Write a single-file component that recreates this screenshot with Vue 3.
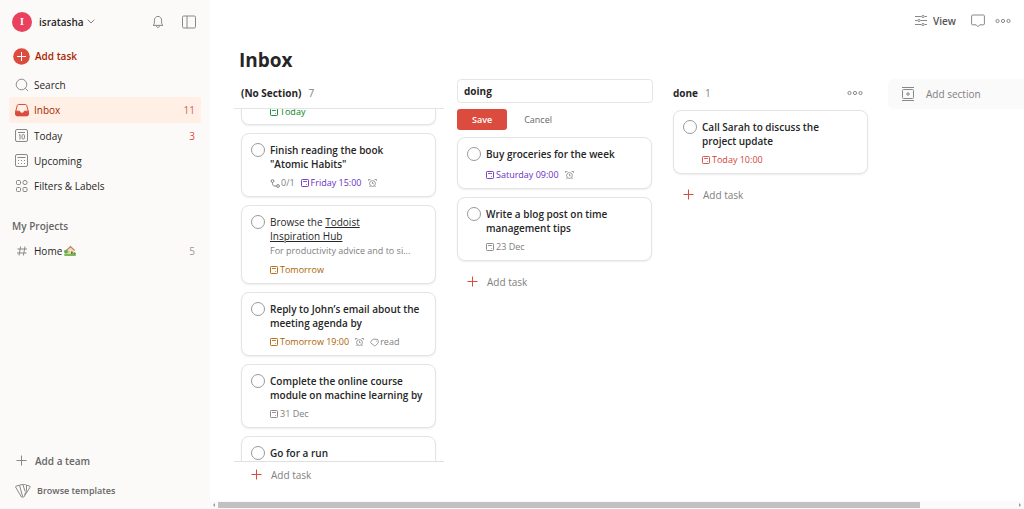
<script setup>
import { ref } from 'vue'

const navItems = [
  { label: 'Search', icon: 'search' },
  { label: 'Inbox', icon: 'inbox', count: 11, active: true },
  { label: 'Today', icon: 'today', count: 3, hot: true },
  { label: 'Upcoming', icon: 'upcoming' },
  { label: 'Filters & Labels', icon: 'filters' }
]

const sectionName = ref('doing')

const columns = [
  {
    id: 'none',
    name: '(No Section)',
    count: 7,
    scrolled: true,
    tasks: [
      { id: 1, cut: true, due: 'Today', tone: 'green' },
      { id: 2, title: 'Finish reading the book\n"Atomic Habits"', sub: '0/1', due: 'Friday 15:00', tone: 'purple', alarm: true },
      { id: 3, title: 'Browse the ', link: 'Todoist\nInspiration Hub', plain: true, note: 'For productivity advice and to si...', due: 'Tomorrow', tone: 'orange' },
      { id: 4, title: 'Reply to John’s email about the meeting agenda by', due: 'Tomorrow 19:00', tone: 'orange', alarm: true, label: 'read' },
      { id: 5, title: 'Complete the online course module on machine learning by', due: '31 Dec', tone: 'grey' },
      { id: 6, title: 'Go for a run' }
    ]
  },
  {
    id: 'doing',
    editing: true,
    tasks: [
      { id: 7, title: 'Buy groceries for the week', due: 'Saturday 09:00', tone: 'purple', alarm: true },
      { id: 8, title: 'Write a blog post on time management tips', due: '23 Dec', tone: 'grey' }
    ]
  },
  {
    id: 'done',
    name: 'done',
    count: 1,
    menu: true,
    tasks: [
      { id: 9, title: 'Call Sarah to discuss the\nproject update', due: 'Today 10:00', tone: 'red' }
    ]
  }
]
</script>

<template>
  <svg class="sprite" aria-hidden="true">
    <symbol id="i-search" viewBox="0 0 14 14"><circle cx="6.5" cy="6.5" r="5.3" /><path d="M10.4 10.4 13 13" /></symbol>
    <symbol id="i-inbox" viewBox="0 0 14 14">
      <path d="M3.4 1.5h7.2c.6 0 1 .4 1.1.9l1.6 6v3.1c0 .7-.5 1.2-1.2 1.2H1.9c-.7 0-1.2-.5-1.2-1.2V8.4l1.6-6c.1-.5.5-.9 1.1-.9z" />
      <path class="solid" d="M.7 8.200h3.900c.2 1.200 1.200 2 2.400 2s2.200-.8 2.400-2h3.900v3.300c0 .7-.5 1.200-1.200 1.200H1.900c-.7 0-1.200-.5-1.200-1.200z" />
    </symbol>
    <symbol id="i-today" viewBox="0 0 14 14"><rect x=".5" y=".5" width="12" height="12" rx="1.5" /><path d="M3 3.500h7M4 6.200l1-.7v5" /><rect x="7" y="5.500" width="2.500" height="4.500" rx="1.200" /></symbol>
    <symbol id="i-upcoming" viewBox="0 0 14 14"><rect x=".5" y=".5" width="12" height="12" rx="1.5" /><path d="M2.500 3.500h8M3 6.500h1M6 6.500h1M9 6.500h1M3 9.500h1M6 9.500h1M9 9.500h1" /></symbol>
    <symbol id="i-filters" viewBox="0 0 14 14"><rect x="1.500" y="1.500" width="4" height="4" rx="1" /><circle cx="10" cy="3.500" r="2.100" /><rect x="1.500" y="8.500" width="4" height="4" rx="1" /><rect x="8" y="8.500" width="4" height="4" rx="1" /></symbol>
    <symbol id="i-hash" viewBox="0 0 14 14"><path d="M5.600 2.500 4 11.500M10 2.500 8.400 11.500M2.500 5h9.500M2 9h9.500" /></symbol>
    <symbol id="i-plus" viewBox="0 0 14 14"><path d="M6.500 1.500v10M1.500 6.500h10" /></symbol>
    <symbol id="i-bell" viewBox="0 0 14 14"><path d="M2 10.400c1-.7 1.400-1.600 1.400-3.200V5.300C3.400 3 4.900 1.400 7 1.400s3.600 1.600 3.600 3.900v1.900c0 1.600.4 2.500 1.400 3.200zM5.500 10.600c0 1.200.6 1.900 1.500 1.900s1.500-.7 1.500-1.900" /></symbol>
    <symbol id="i-panel" viewBox="0 0 14 14"><rect x=".5" y="1" width="13" height="12" rx="1.200" /><path d="M5 1v12" /></symbol>
    <symbol id="i-templates" viewBox="0 0 16 14"><path d="M4.500 1.200 1 2.200c-.4.200-.5.500-.4.900L6.400 13l1.200.4M4.500 1.200 7 .6c1.800-.3 3.500 0 4.500.6M4.500 1.200l3.100 11.400c.2.600.6.800 1.200.4l6.400-9.900c.2-.4.100-.7-.3-.9l-3.400-1M8 .8l2 6.500M11.500 1.200v5.500l-2 4.500" /></symbol>
    <symbol id="i-cal" viewBox="0 0 9 9"><rect x=".5" y=".5" width="7" height="7" rx=".8" stroke-width=".9" /><path d="M2 2.500h4" stroke-width=".8" /><path d="M5 5.500h1" stroke-width=".6" /></symbol>
    <symbol id="i-alarm" viewBox="0 0 9 9"><circle cx="4.500" cy="4.500" r="2.900" stroke-width=".8" /><path d="M4.500 3v1.700h1.200M.5.500h1.900M6.600.5h1.900M.5.500v1.300M8.500.5v1.300M2.300 7l-.9 1M6.700 7l.9 1" stroke-width=".8" /></symbol>
    <symbol id="i-sub" viewBox="0 0 10 9"><circle cx="2.500" cy="2" r="1.400" /><circle cx="8" cy="7" r="1.400" /><path d="M2.500 3.500v1C2.500 6.200 3.300 7 4.800 7h1.700" /></symbol>
    <symbol id="i-tag" viewBox="0 0 9 8"><path d="M3.300.8h3.600c.8 0 1.300.5 1.300 1.200v2c0 .3-.1.600-.3.800L5.500 7c-.4.400-.9.400-1.300.1L.9 4.500c-.4-.3-.4-.8-.1-1.200L2.400 1.200c.2-.3.500-.4.900-.4z" stroke-width=".8" /><circle class="solid" cx="6.300" cy="2.600" r=".2" stroke-width=".5" /></symbol>
    <symbol id="i-sliders" viewBox="0 0 14 12"><path d="M1 1.500h6.500M10.500 1.500H13M1 5.500h2.500M6.500 5.500H13M1 9.500h6.500M10.500 9.500H13" /><circle cx="9" cy="1.500" r="1.100" /><circle cx="5" cy="5.500" r="1.100" /><circle cx="9" cy="9.500" r="1.100" /></symbol>
    <symbol id="i-comment" viewBox="0 0 14 14"><path d="M1.500 1h11c.5 0 .9.400.9.900v8c0 .5-.4.900-.9.900H8.800L7 12.700l-1.800-1.900H1.500c-.5 0-.9-.4-.9-.9v-8c0-.5.400-.9.900-.9z" /></symbol>
    <symbol id="i-dots" viewBox="0 0 16 6"><circle cx="2.500" cy="3" r="1.600" /><circle cx="8" cy="3" r="1.600" /><circle cx="13.500" cy="3" r="1.600" /></symbol>
    <symbol id="i-section" viewBox="0 0 14 14"><path d="M1 .5h12M1 13.500h12M7 5v4M5 7h4" /><rect x="1.500" y="2.500" width="11" height="9" rx="1" /></symbol>
  </svg>

  <div class="app">
    <aside class="sidebar">
      <div class="profile">
        <button class="user" type="button">
          <span class="avatar">I</span>
          <span>isratasha</span>
          <svg class="chevron" viewBox="0 0 8 5" aria-hidden="true"><path d="M.7.700 4 4 7.300.7" /></svg>
        </button>
        <div class="profile-tools">
          <button type="button" aria-label="Notifications"><svg class="icon"><use href="#i-bell" /></svg></button>
          <button type="button" aria-label="Toggle sidebar"><svg class="icon"><use href="#i-panel" /></svg></button>
        </div>
      </div>

      <button class="quick-add" type="button">
        <svg class="quick-icon" viewBox="0 0 17 17" aria-hidden="true"><circle cx="8.500" cy="8.500" r="8.300" /><path d="M8.500 4v9M4 8.500h9" /></svg>
        <span>Add task</span>
      </button>

      <nav>
        <a v-for="item in navItems" :key="item.label" class="nav-row" :class="{ active: item.active, hot: item.hot }" href="#">
          <svg class="icon"><use :href="'#i-' + item.icon" /></svg>
          <span class="nav-label">{{ item.label }}</span>
          <span v-if="item.count" class="nav-count">{{ item.count }}</span>
        </a>
      </nav>

      <h2 class="projects-title">My Projects</h2>
      <a class="nav-row" href="#">
        <svg class="icon"><use href="#i-hash" /></svg>
        <span class="nav-label project">Home
          <svg class="house" viewBox="0 0 12 11" role="img" aria-label="House with garden">
            <path fill="#f3e3b0" d="M3 5.500 6.500 2 10 5.500V10H3z" />
            <path fill="#b9825b" d="M6.500.800 1.800 5.200l.9.900 3.800-3.600 3.800 3.600.9-.9z" />
            <path fill="#8a5a3c" d="M7 6.500h1.700V10H7z" />
            <path fill="#8fc7e8" d="M4.200 6h1.600v1.600H4.200z" />
            <circle cx="2" cy="6.800" r="2" fill="#6aa84f" />
            <path fill="#7cb95b" d="M.3 8.800h11.400V11H.3z" />
            <circle cx="10.500" cy="8.500" r="1.200" fill="#5b9a43" />
          </svg>
        </span>
        <span class="nav-count">5</span>
      </a>

      <div class="side-foot">
        <button class="foot-row" type="button"><svg class="icon"><use href="#i-plus" /></svg><span>Add a team</span></button>
        <button class="foot-row small" type="button"><svg class="icon wide"><use href="#i-templates" /></svg><span>Browse templates</span></button>
      </div>
    </aside>

    <main class="main">
      <header class="topbar">
        <button class="view" type="button"><svg class="icon"><use href="#i-sliders" /></svg><span>View</span></button>
        <button type="button" aria-label="Comments"><svg class="icon"><use href="#i-comment" /></svg></button>
        <button type="button" aria-label="More options"><svg class="dots"><use href="#i-dots" /></svg></button>
      </header>
      <h1>Inbox</h1>

      <div class="board">
        <section v-for="col in columns" :key="col.id" class="column">
          <form v-if="col.editing" class="edit" @submit.prevent>
            <input v-model="sectionName" type="text" aria-label="Section name">
            <div class="edit-actions">
              <button class="save" type="submit">Save</button>
              <button class="cancel" type="button">Cancel</button>
            </div>
          </form>
          <header v-else class="col-head">
            <h3>{{ col.name }}</h3>
            <span class="col-count">{{ col.count }}</span>
            <button v-if="col.menu" class="col-menu" type="button" aria-label="Section options"><svg class="dots"><use href="#i-dots" /></svg></button>
          </header>

          <div class="list" :class="{ scrolled: col.scrolled }">
            <article v-for="task in col.tasks" :key="task.id" class="card" :class="{ cut: task.cut }">
              <input v-if="task.title" :id="'task-' + task.id" class="check" type="checkbox">
              <div class="body">
                <label v-if="task.title" class="title" :class="{ plain: task.plain }" :for="'task-' + task.id">{{ task.title }}<a v-if="task.link" href="#">{{ task.link }}</a></label>
                <p v-if="task.note" class="note">{{ task.note }}</p>
                <div v-if="task.due" class="meta">
                  <span v-if="task.sub" class="chip"><svg class="sub"><use href="#i-sub" /></svg>{{ task.sub }}</span>
                  <span class="chip" :class="task.tone"><svg class="mini"><use href="#i-cal" /></svg>{{ task.due }}</span>
                  <svg v-if="task.alarm" class="mini" role="img" aria-label="Reminder"><use href="#i-alarm" /></svg>
                  <span v-if="task.label" class="chip"><svg class="mini"><use href="#i-tag" /></svg>{{ task.label }}</span>
                </div>
              </div>
            </article>
          </div>
          <button class="add-task" type="button"><svg class="icon"><use href="#i-plus" /></svg><span>Add task</span></button>
        </section>

        <section class="column">
          <button class="add-section" type="button"><svg class="icon"><use href="#i-section" /></svg><span>Add section</span></button>
        </section>
      </div>

      <div class="scrollbar" aria-hidden="true">
        <svg class="arrow" viewBox="0 0 8 8"><path d="M5 2v4L3 4z" /></svg>
        <div class="track"><div class="thumb"></div></div>
        <svg class="arrow" viewBox="0 0 8 8"><path d="M3 2v4l2-2z" /></svg>
      </div>
    </main>
  </div>
</template>

<style>
body {
  margin: 0;
  background: #fff;
}
</style>

<style scoped>
.app {
  display: flex;
  height: 100vh;
  overflow: hidden;
  font-family: "Open Sans", "Noto Sans", sans-serif;
  font-size: 10px;
  line-height: 14px;
  color: #262626;
}
.sprite {
  position: absolute;
  width: 0;
  height: 0;
}
button {
  display: flex;
  align-items: center;
  margin: 0;
  padding: 0;
  border: 0;
  background: none;
  font: inherit;
  color: inherit;
}
a {
  color: inherit;
  text-decoration: none;
}
h1, h2, h3, p {
  margin: 0;
}
svg {
  flex: none;
  fill: none;
  stroke: currentColor;
  stroke-width: 1;
}
.solid {
  fill: currentColor;
}
.icon {
  width: 14px;
  height: 14px;
  color: #888;
}
.dots {
  width: 16px;
  height: 6px;
  color: #888;
}

.sidebar {
  display: flex;
  flex-direction: column;
  flex: none;
  box-sizing: border-box;
  width: 210px;
  padding: 0 9px;
  background: #fcfaf8;
}
.profile {
  display: flex;
  justify-content: space-between;
  align-items: center;
  height: 43px;
  padding: 0 5px 0 3px;
}
.user {
  font-weight: 600;
}
.avatar {
  display: grid;
  place-items: center;
  width: 20px;
  height: 20px;
  margin-right: 7px;
  border-radius: 50%;
  background: #e8425e;
  color: #fff;
  font-family: "Liberation Serif", serif;
  font-weight: 700;
}
.chevron {
  width: 8px;
  height: 5px;
  margin-left: 3px;
  color: #808080;
}
.profile-tools {
  display: flex;
  gap: 17px;
}
.quick-add {
  height: 26px;
  margin-bottom: 3px;
  padding-left: 4px;
  gap: 5px;
  color: #a81f00;
  font-weight: 600;
}
.quick-icon {
  width: 17px;
  height: 17px;
  color: #fff;
}
.quick-icon circle {
  fill: #dc4c3e;
  stroke: none;
}
.nav-row {
  display: flex;
  align-items: center;
  box-sizing: border-box;
  height: 25px;
  padding: 0 6px;
  border-radius: 3px;
}
.nav-row.active {
  height: 26px;
}
.nav-label {
  flex: 1;
  margin-left: 5px;
}
.nav-count {
  color: #999;
}
.hot .nav-count {
  color: #dc4c3e;
}
.active {
  background: #ffefe5;
  color: #a81f00;
}
.active .icon {
  color: #dc4c3e;
}
.active .nav-count {
  color: #d1665b;
}
.projects-title {
  margin: 21px 0 5px 3px;
  font-size: 10px;
  font-weight: 600;
  line-height: 14px;
  color: #666;
}
.project {
  display: flex;
  align-items: center;
  gap: 2px;
}
.house {
  width: 12px;
  height: 11px;
  stroke: none;
}
.side-foot {
  margin-top: auto;
  padding-bottom: 3px;
}
.foot-row {
  height: 30px;
  padding-left: 6px;
  gap: 6px;
  color: #666;
  font-weight: 600;
}
.foot-row.small {
  font-size: 9px;
}
.icon.wide {
  width: 16px;
}

.main {
  display: flex;
  flex-direction: column;
  flex: 1;
  min-width: 0;
}
.topbar {
  display: flex;
  justify-content: flex-end;
  align-items: center;
  height: 42px;
  padding-right: 13px;
  gap: 10px;
  color: #555;
  font-weight: 600;
}
.view {
  gap: 5px;
  margin-right: 5px;
}
h1 {
  margin: 4px 0 5px 29px;
  font-size: 19px;
  line-height: 28px;
  font-weight: 700;
}
.board {
  display: flex;
  flex: 1;
  min-height: 0;
  gap: 6px;
  padding: 0 0 13px 24px;
  overflow: hidden;
}
.column {
  display: flex;
  flex-direction: column;
  flex: none;
  width: 210px;
}
.col-head {
  display: flex;
  align-items: center;
  flex: none;
  box-sizing: border-box;
  height: 29px;
  padding: 0 13px 1px 7px;
}
h3 {
  font-size: 10px;
  line-height: 14px;
  font-weight: 700;
}
.col-count {
  margin-left: 7px;
  color: #808080;
}
.col-menu {
  margin-left: auto;
}
.edit {
  padding: 0 7px 5px;
}
.edit input {
  display: block;
  box-sizing: border-box;
  width: 100%;
  height: 24px;
  padding: 0 6px;
  border: 1px solid #e6e6e6;
  border-radius: 4px;
  outline: 0;
  font: inherit;
  font-weight: 700;
  color: #262626;
}
.edit-actions {
  display: flex;
  gap: 17px;
  margin-top: 6px;
  font-size: 9px;
}
.edit-actions button {
  height: 21px;
}
.edit-actions .save {
  padding: 0 15px;
  border-radius: 3px;
  background: #dc4c3e;
  color: #fff;
  font-weight: 600;
}
.cancel {
  color: #666;
}
.list {
  display: flex;
  flex-direction: column;
  gap: 8px;
  padding: 2px 8px 8px 7px;
}
.scrolled {
  flex: 1;
  min-height: 0;
  padding-top: 0;
  padding-bottom: 0;
  border-top: 1px solid #e4e4e4;
  border-bottom: 1px solid #e0e0e0;
  overflow: hidden;
}
.card {
  display: flex;
  flex: none;
  gap: 5px;
  padding: 9px 9px 6px;
  border: 1px solid #e4e4e4;
  border-radius: 8px;
  box-shadow: 0 1px 2px rgba(0, 0, 0, 0.07);
  background: #fff;
}
.cut {
  margin-top: -9px;
  padding: 0 9px 5px 28px;
  border-top: 0;
  border-top-left-radius: 0;
  border-top-right-radius: 0;
}
.check {
  appearance: none;
  flex: none;
  width: 14px;
  height: 14px;
  margin: 0;
  border: 1px solid #999;
  border-radius: 50%;
}
.body {
  flex: 1;
  min-width: 0;
}
.title {
  display: block;
  min-height: 16px;
  font-weight: 600;
  white-space: pre-line;
}
.title.plain {
  font-weight: 400;
}
.title a {
  text-decoration: underline;
}
.note {
  font-size: 9px;
  line-height: 15px;
  color: #808080;
  white-space: nowrap;
}
.meta {
  display: flex;
  align-items: center;
  gap: 6px;
  margin-top: 5px;
  font-size: 9px;
  color: #808080;
}
.chip {
  display: flex;
  align-items: center;
  gap: 1px;
}
.mini {
  width: 9px;
  height: 9px;
}
.sub {
  width: 10px;
  height: 9px;
}
.green { color: #058527; }
.purple { color: #692fc2; }
.orange { color: #ad6200; }
.red { color: #d1453b; }
.grey { color: #808080; }
.add-task {
  flex: none;
  height: 26px;
  padding-left: 10px;
  gap: 7px;
  margin-left: 6px;
  color: #808080;
}
.add-task .icon {
  color: #dc4c3e;
}
.add-section {
  width: 100%;
  height: 30px;
  margin-left: 6px;
  padding: 0 13px;
  gap: 11px;
  border-radius: 6px;
  background: #fafafa;
  color: #808080;
}
.scrollbar {
  display: flex;
  flex: none;
  height: 8px;
  background: #fafafa;
}
.arrow {
  width: 8px;
  height: 8px;
}
.arrow path {
  fill: #999;
  stroke: none;
}
.track {
  flex: 1;
  padding: 1px 0;
}
.thumb {
  width: 88%;
  height: 6px;
  background: #c1c1c1;
}
</style>
